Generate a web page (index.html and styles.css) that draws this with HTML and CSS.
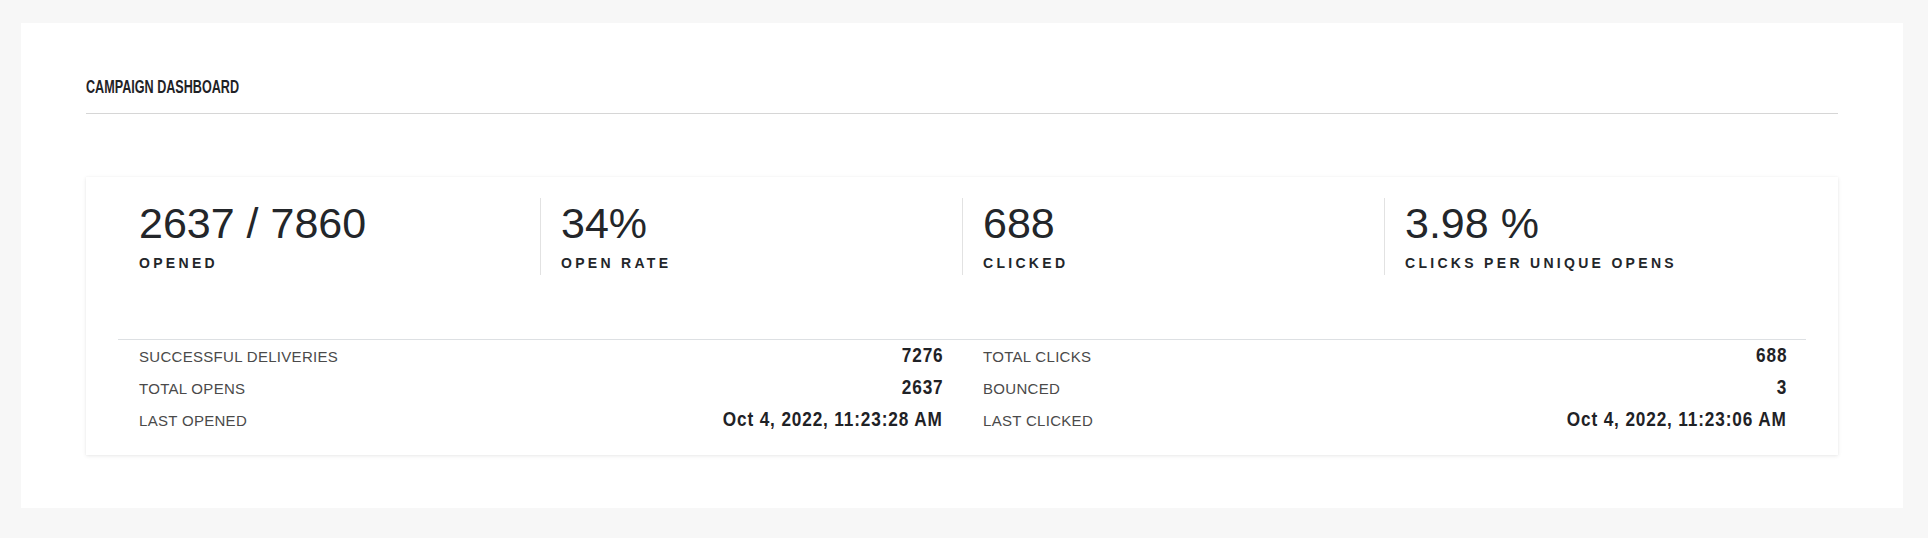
FILE: index.html
```html
<!DOCTYPE html>
<html lang="en">
<head>
<meta charset="utf-8">
<title>Campaign Dashboard</title>
<link rel="stylesheet" href="styles.css">
</head>
<body>
<main class="panel">
  <h1 class="panel-title"><span class="condensed title-text">CAMPAIGN DASHBOARD</span></h1>
  <section class="card">
    <div class="stats">
      <div class="stat">
        <div class="stat-value">2637 / 7860</div>
        <div class="stat-label">OPENED</div>
      </div>
      <div class="stat">
        <div class="stat-value">34%</div>
        <div class="stat-label">OPEN RATE</div>
      </div>
      <div class="stat">
        <div class="stat-value">688</div>
        <div class="stat-label">CLICKED</div>
      </div>
      <div class="stat">
        <div class="stat-value">3.98 %</div>
        <div class="stat-label">CLICKS PER UNIQUE OPENS</div>
      </div>
    </div>
    <div class="details">
      <div class="detail-col">
        <div class="row"><span class="row-label">SUCCESSFUL DELIVERIES</span><span class="row-value condensed">7276</span></div>
        <div class="row"><span class="row-label">TOTAL OPENS</span><span class="row-value condensed">2637</span></div>
        <div class="row"><span class="row-label">LAST OPENED</span><span class="row-value condensed">Oct 4, 2022, 11:23:28 AM</span></div>
      </div>
      <div class="detail-col">
        <div class="row"><span class="row-label">TOTAL CLICKS</span><span class="row-value condensed">688</span></div>
        <div class="row"><span class="row-label">BOUNCED</span><span class="row-value condensed">3</span></div>
        <div class="row"><span class="row-label">LAST CLICKED</span><span class="row-value condensed">Oct 4, 2022, 11:23:06 AM</span></div>
      </div>
    </div>
  </section>
</main>
</body>
</html>
```

FILE: styles.css
```css
html, body {
  background: #f7f7f7;
}

body {
  margin: 23px 25px 30px 21px;
  font-family: "Liberation Sans", Arial, sans-serif;
  color: #23262a;
}

.panel {
  background: #ffffff;
  box-shadow: 0 1px 3px rgba(0, 0, 0, 0.07);
  padding: 54px 65px 53px 65px;
}

.condensed {
  display: inline-block;
  font-family: "Liberation Sans", Arial, sans-serif;
  font-weight: 700;
  white-space: nowrap;
}

.panel-title {
  margin: 0 0 63px 0;
  padding-bottom: 16px;
  border-bottom: 1px solid #d6d6d6;
  font-size: 17.5px;
  line-height: 20px;
  font-weight: 700;
  color: #1f2226;
}

.title-text {
  transform: scaleX(0.72);
  transform-origin: left center;
}

.card {
  background: #ffffff;
  box-shadow: 0 1px 4px rgba(0, 0, 0, 0.09), 0 0 1px rgba(0, 0, 0, 0.05);
  padding: 21px 32px 21px 32px;
}

.stats {
  display: grid;
  grid-template-columns: repeat(4, 1fr);
}

.stat {
  padding: 0 0 4px 20px;
  border-left: 1px solid #e2e2e2;
}

.stat:first-child {
  border-left: none;
  padding-left: 21px;
}

.stat-value {
  font-size: 43px;
  line-height: 50px;
  font-weight: 400;
  color: #23262a;
}

.stat-label {
  margin-top: 7px;
  font-size: 14px;
  line-height: 16px;
  font-weight: 700;
  letter-spacing: 3.3px;
  color: #23262a;
}

.details {
  margin-top: 64px;
  border-top: 1px solid #dde0e3;
  display: grid;
  grid-template-columns: 1fr 1fr;
}

.detail-col {
  display: flex;
  flex-direction: column;
  gap: 2px;
  padding: 0 20px 0 21px;
}

.row {
  display: flex;
  justify-content: space-between;
  align-items: baseline;
  height: 30px;
  line-height: 30px;
}

.row-label {
  font-size: 15px;
  letter-spacing: 0.3px;
  color: #4a4a4a;
}

.row-value {
  font-size: 20px;
  letter-spacing: 1px;
  margin-right: -1px;
  transform: scaleX(0.86);
  transform-origin: right center;
  color: #1f2226;
}
```
